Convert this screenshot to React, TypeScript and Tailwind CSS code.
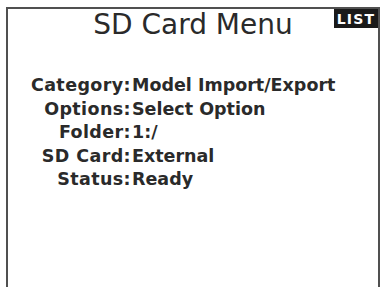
import React from "react";

const rows: [string, string][] = [
  ["Category:", "Model Import/Export"],
  ["Options:", "Select Option"],
  ["Folder:", "1:/"],
  ["SD Card:", "External"],
  ["Status:", "Ready"],
];

export default function App() {
  return (
    <div className="w-[381px] h-[287px] bg-white overflow-hidden">
      <div className="relative ml-[6px] mt-[7px] w-[374px] h-[300px] border-l-[2px] border-t-[2px] border-r-[2px] border-[#505050]">
        <div className="absolute top-0 right-0 w-[44px] h-[19px] bg-[#1a1a1a] flex items-center justify-center text-white text-[14px] font-bold tracking-[1.2px] leading-none [font-family:'DejaVu_Sans',sans-serif]">
          LIST
        </div>
        <div className="pt-[0px] text-center text-[28px] leading-[32px] text-[#2a2a2a] [font-family:'DejaVu_Sans',sans-serif]">
          SD Card Menu
        </div>
        <div className="mt-[33px] flex flex-col text-[#2a2a2a] [font-family:'DejaVu_Sans',sans-serif] font-bold text-[17.5px] leading-[23.5px]">
          {rows.map(([k, v]) => (
            <div key={k} className="flex">
              <div className="w-[123px] text-right tracking-[0.4px]">{k}</div>
              <div className="pl-[1px]">{v}</div>
            </div>
          ))}
        </div>
      </div>
    </div>
  );
}
